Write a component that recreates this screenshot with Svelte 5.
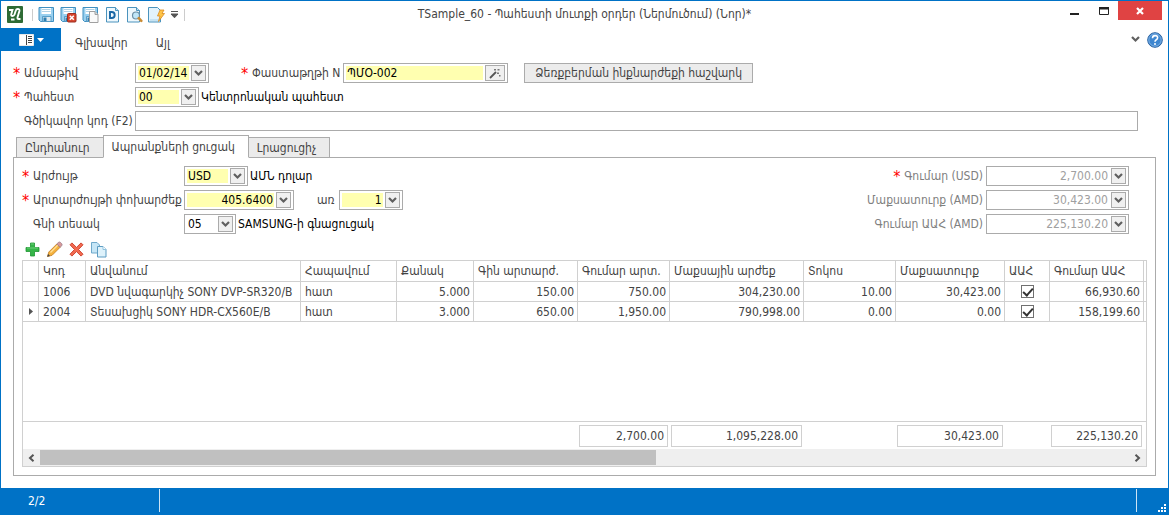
<script>
	let activeTab = $state(1);

	const tabs = ['Ընդհանուր', 'Ապրանքների ցուցակ', 'Լրացուցիչ'];
	const quickIcons = ['save', 'saveClose', 'saveNew', 'doc', 'preview', 'quick'];
	const quickTitles = ['Save', 'Save and close', 'Save and new', 'Document', 'Preview', 'Run'];
	const rowIcons = ['add', 'edit', 'remove', 'copy'];
	const rowTitles = ['Add', 'Edit', 'Delete', 'Copy'];

	const columns = [
		{ key: 'code', label: 'Կոդ', width: 47 },
		{ key: 'name', label: 'Անվանում', width: 0 },
		{ key: 'unit', label: 'Հապավում', width: 96 },
		{ key: 'qty', label: 'Քանակ', width: 77, num: true },
		{ key: 'price', label: 'Գին արտարժ.', width: 104, num: true },
		{ key: 'sum', label: 'Գումար արտ.', width: 92, num: true, total: '2,700.00' },
		{ key: 'customs', label: 'Մաքսային արժեք', width: 134, num: true, total: '1,095,228.00' },
		{ key: 'percent', label: 'Տոկոս', width: 92, num: true },
		{ key: 'duty', label: 'Մաքսատուրք', width: 109, num: true, total: '30,423.00' },
		{ key: 'vat', label: 'ԱԱՀ', width: 45 },
		{ key: 'vatSum', label: 'Գումար ԱԱՀ', width: 94, num: true, total: '225,130.20' }
	];

	let rows = $state([
		{
			code: '1006',
			name: 'DVD նվագարկիչ SONY DVP-SR320/B',
			unit: 'հատ',
			qty: '5.000',
			price: '150.00',
			sum: '750.00',
			customs: '304,230.00',
			percent: '10.00',
			duty: '30,423.00',
			vat: true,
			vatSum: '66,930.60'
		},
		{
			code: '2004',
			name: 'Տեսախցիկ SONY HDR-CX560E/B',
			unit: 'հատ',
			qty: '3.000',
			price: '650.00',
			sum: '1,950.00',
			customs: '790,998.00',
			percent: '0.00',
			duty: '0.00',
			vat: true,
			vatSum: '158,199.60'
		}
	]);
	let current = $state(1);

	const totals = [
		{ id: 'total', label: 'Գումար (USD)', value: '2,700.00', required: true },
		{ id: 'duty', label: 'Մաքսատուրք (AMD)', value: '30,423.00' },
		{ id: 'vat', label: 'Գումար ԱԱՀ (AMD)', value: '225,130.20' }
	];

	// share of the columns that fits in the view
	const visiblePart = 0.566;

	const footerColumns =
		'16px ' + columns.map((c) => (c.width ? `${c.width}px` : 'minmax(0, 1fr)')).join(' ') + ' 2px';
</script>

{#snippet chevron()}
	<svg width="9" height="7" viewBox="0 0 9 7"><path d="M1 1 L4.5 4.5 L8 1" fill="none" stroke="#606060" stroke-width="2.2" /></svg>
{/snippet}

{#snippet floppy()}
	<path d="M1 1.5h14.500v14h-13l-1.500-1.500z" fill="#9ad0ef" stroke="#3f8fc0" />
	<path d="M3.500 2h9.500v6h-9.500z" fill="#fff" />
	<path d="M4 3.500h8.500M4 5.500h8.500" stroke="#b0d2e6" />
	<path d="M4.500 10.500h8.500v5h-8.500z" fill="#dfeaf1" stroke="#3f8fc0" stroke-width=".8" />
	<path d="M5.500 11.500h3v3.500h-3z" fill="#2f7fb0" />
{/snippet}

{#snippet icon(name)}
	<svg width="17" height="17" viewBox="0 0 17 17" aria-hidden="true">
		{#if name === 'save'}
			{@render floppy()}
		{:else if name === 'saveClose'}
			{@render floppy()}
			<rect x="7.500" y="7.500" width="8.500" height="8.500" rx="1" fill="#d8452e" stroke="#9c2e20" />
			<path d="M9.800 9.800l4 4M13.800 9.800l-4 4" stroke="#fff" stroke-width="1.600" />
		{:else if name === 'saveNew'}
			{@render floppy()}
			<path d="M7.500 5.500h5.500l3 3v8h-8.500z" fill="#fafafa" stroke="#a0a0a0" />
			<path d="M13 5.500v3h3" fill="#ddd" stroke="#a0a0a0" />
		{:else if name === 'doc'}
			<path d="M2.500 1.500h9l3 3v11.500h-12z" fill="#eef8fd" stroke="#4b93bd" />
			<path d="M11.500 1.500v3h3" fill="#bfe0f2" stroke="#4b93bd" />
			<path d="M6 6v6h1.700a3 3 0 0 0 0-6z" fill="none" stroke="#1766a5" stroke-width="1.900" />
		{:else if name === 'preview'}
			<path d="M1.500 1.500h9l3 3v11.500h-12z" fill="#eef8fd" stroke="#4b93bd" />
			<path d="M10.500 1.500v3h3" fill="#bfe0f2" stroke="#4b93bd" />
			<circle cx="10" cy="9.500" r="3.500" fill="#bfe6f8" stroke="#6b8fa5" stroke-width="1.200" />
			<path d="M12.800 12.200l2.500 2.600" stroke="#c98b33" stroke-width="2.600" stroke-linecap="round" />
		{:else if name === 'quick'}
			<path d="M.500 1.500h9l3 3v11.500h-12z" fill="#e2f2fb" stroke="#4b93bd" />
			<path d="M2 14h9" stroke="#a9d3ea" />
			<path d="M12 4h4l-2 3.500h2.500l-6 8 1.500-5.500h-2.500z" fill="#ffc447" stroke="#d98a1e" stroke-width=".8" />
		{:else if name === 'add'}
			<path d="M6.500 2h4v4.500h4.500v4h-4.500v4.500h-4v-4.500h-4.500v-4h4.500z" fill="#35b548" stroke="#1f9434" stroke-width=".8" />
			<path d="M7 3h3M3 7h11" stroke="#7cd987" stroke-width=".8" />
		{:else if name === 'edit'}
			<path d="M1.500 15.500l1.300-4.500 8-8 3.300 3.300-8 8z" fill="#f5b23c" stroke="#c07a1e" stroke-width=".8" />
			<path d="M4.500 11.500l7.500-7.500" stroke="#ffe09a" stroke-width="1.200" />
			<path d="M10.800 3l1.600-1.600q1-.8 2 0l1.300 1.300q.8 1 0 2l-1.600 1.600z" fill="#d99a9a" stroke="#9a7a8a" stroke-width=".8" />
			<path d="M1.200 15.800l.9-2.800 1.900 1.900z" fill="#444" />
		{:else if name === 'remove'}
			<path d="M2 3.800l1.900-1.900 4.600 4.500 4.600-4.500 1.900 1.900-4.500 4.700 4.500 4.700-1.900 1.900-4.600-4.500-4.600 4.500-1.900-1.900 4.500-4.700z" fill="#f26a50" stroke="#c93a26" stroke-width=".9" />
		{:else if name === 'copy'}
			<path d="M1.500 1.500h5.500l2.500 2.500v8h-8z" fill="#c6e6f6" stroke="#6fa9cb" />
			<path d="M7.500 5.500h5.500l3 3v7.500h-8.500z" fill="#def2fb" stroke="#5d9cc2" />
			<path d="M13 5.500v3h3" fill="#fff" stroke="#8fc3df" />
		{/if}
	</svg>
{/snippet}

{#snippet editor(id, value, size, kind)}
	<div class="field {size} {kind}">
		<input {id} type="text" {value} disabled={kind === 'disabled'} />
		<button class="drop" aria-label="Open" disabled={kind === 'disabled'}>{@render chevron()}</button>
	</div>
{/snippet}

{#snippet lookup(id, value, size, kind)}
	<div class="field {size} {kind}">
		<select {id}><option>{value}</option></select>
		<span class="drop over">{@render chevron()}</span>
	</div>
{/snippet}

<div class="window">
	<header class="title-bar">
		<div class="quick">
			<svg class="logo" width="16" height="17" viewBox="0 0 16 17" aria-hidden="true">
				<rect width="16" height="17" rx="1" fill="#2e6b35" />
				<path d="M2 4h3.500l-1.300 4.500q-.3 1.500 1.300 1.500 1.500 0 2-1.500l1.300-4q.4-1.500 2-1.500 2 0 1.600 2l-1.900 6.500q-.3 1.500 1.200 1.500h1.800M4 13.500h3.500" fill="none" stroke="#fff" stroke-width="1.900" />
			</svg>
			<i class="sep"></i>
			{#each quickIcons as name, i}
				<button class="icon-button" aria-label={quickTitles[i]}>{@render icon(name)}</button>
			{/each}
			<button class="more" aria-label="Customize">
				<svg width="9" height="8" viewBox="0 0 9 8"><path d="M1 .5h7M1 3h7L4.500 6.800z" fill="#555" stroke="#555" stroke-width="1" /></svg>
			</button>
			<i class="sep"></i>
		</div>
		<h1>TSample_60 - Պահեստի մուտքի օրդեր (Ներմուծում) (Նոր)*</h1>
		<div class="window-buttons">
			<button aria-label="Minimize"><svg width="9" height="8" viewBox="0 0 9 8"><path d="M0 6h9v2H0z" fill="#222" /></svg></button>
			<button aria-label="Maximize"><svg width="10" height="8" viewBox="0 0 10 8"><path d="M.500 1v6.500h9V1" fill="none" stroke="#222" /><path d="M0 0h10v2.500H0z" fill="#222" /></svg></button>
			<button class="close" aria-label="Close"><svg width="8" height="8" viewBox="0 0 8 8"><path d="M1 1l6 6M7 1L1 7" stroke="#fff" stroke-width="2.200" /></svg></button>
		</div>
	</header>

	<nav class="ribbon">
		<button class="file" aria-label="Menu">
			<svg width="15" height="12" viewBox="0 0 15 12"><path d="M.500 .5h14v11h-14z" fill="#fff" stroke="#e8e8e8" /><path d="M7.500 1v10" stroke="#444" /><path d="M9 2.500h4M9 4.500h4M9 6.500h4M9 8.500h4" stroke="#444" /></svg>
			<svg width="7" height="4" viewBox="0 0 7 4"><path d="M0 0h7L3.500 4z" fill="#fff" /></svg>
		</button>
		<a href="#main">Գլխավոր</a>
		<a href="#other">Այլ</a>
		<span class="spacer"></span>
		<button class="plain" aria-label="Collapse">{@render chevron()}</button>
		<button class="help" aria-label="Help">
			<svg width="16" height="16" viewBox="0 0 16 16">
				<circle cx="8" cy="8" r="7.300" fill="#3f87d0" stroke="#2b62a0" />
				<circle cx="8" cy="8" r="6.200" fill="none" stroke="#8dbdea" stroke-width=".8" />
				<path d="M5.500 6.200q0-2.600 2.600-2.600t2.500 2.200q0 1.200-1.300 1.900T8 9.800" fill="none" stroke="#fff" stroke-width="1.600" />
				<circle cx="8" cy="12" r="1" fill="#fff" />
			</svg>
		</button>
	</nav>

	<main>
		<form class="document" onsubmit={(e) => e.preventDefault()}>
			<div class="row">
				<label class="required" for="date">Ամսաթիվ</label>
				{@render editor('date', '01/02/14', 'w-date', 'yellow')}
				<label class="required number" for="number">Փաստաթղթի N</label>
				<div class="field w-number yellow">
					<input id="number" type="text" value="ՊՄՕ-002" />
					<button class="drop wide" aria-label="Generate">
						<svg width="12" height="11" viewBox="0 0 12 11"><path d="M1 10l6-6" stroke="#555" stroke-width="1.800" /><path d="M5 1h2v1.500H5zM8.500 1h2v1.500h-2zM8 4.500h2V6H8zM10 7h1.500v1.500H10z" fill="#777" /></svg>
					</button>
				</div>
				<button class="command">Ձեռքբերման ինքնարժեքի հաշվարկ</button>
			</div>
			<div class="row">
				<label class="required" for="store">Պահեստ</label>
				{@render lookup('store', '00', 'w-code', 'yellow')}
				<span class="hint">Կենտրոնական պահեստ</span>
			</div>
			<div class="row">
				<label for="barcode">Գծիկավոր կոդ (F2)</label>
				<input id="barcode" class="barcode" type="text" />
			</div>
		</form>

		<div class="tabs" role="tablist">
			{#each tabs as tab, i}
				<button role="tab" aria-selected={i === activeTab} class:active={i === activeTab} onclick={() => (activeTab = i)}>{tab}</button>
			{/each}
		</div>

		<section class="panel">
			<div class="settings">
				<div class="left">
					<div class="row">
						<label class="required" for="currency">Արժույթ</label>
						{@render lookup('currency', 'USD', 'w-code', 'yellow')}
						<span class="hint">ԱՄՆ դոլար</span>
					</div>
					<div class="row">
						<label class="required" for="rate">Արտարժույթի փոխարժեք</label>
						{@render editor('rate', '405.6400', 'w-rate', 'yellow num')}
						<label class="per" for="per">առ</label>
						{@render editor('per', '1', 'w-code', 'yellow num')}
					</div>
					<div class="row">
						<label for="priceType">Գնի տեսակ</label>
						{@render lookup('priceType', '05', 'w-short', '')}
						<span class="hint">SAMSUNG-ի գնացուցակ</span>
					</div>
				</div>
				<div class="right">
					{#each totals as total}
						<div class="row">
							<label class:required={total.required} for={total.id}>{total.label}</label>
							{@render editor(total.id, total.value, 'w-total', 'disabled')}
						</div>
					{/each}
				</div>
			</div>

			<div class="tools">
				{#each rowIcons as name, i}
					<button class="icon-button" aria-label={rowTitles[i]}>{@render icon(name)}</button>
				{/each}
			</div>

			<div class="grid">
				<table>
					<colgroup>
						<col style="width: 16px" />
						{#each columns as col}
							<col style={col.width ? `width: ${col.width}px` : ''} />
						{/each}
						<col style="width: 2px" />
					</colgroup>
					<thead>
						<tr>
							<th></th>
							{#each columns as col}
								<th>{col.label}</th>
							{/each}
							<th></th>
						</tr>
					</thead>
					<tbody>
						{#each rows as row, i}
							<tr onclick={() => (current = i)}>
								<td class="marker">
									{#if i === current}
										<svg width="4" height="7" viewBox="0 0 4 7"><path d="M0 0L4 3.500L0 7z" fill="#555" /></svg>
									{/if}
								</td>
								{#each columns as col}
									{#if col.key === 'vat'}
										<td class="check"><input type="checkbox" aria-label={col.label} bind:checked={row.vat} /></td>
									{:else}
										<td class:num={col.num}>{row[col.key]}</td>
									{/if}
								{/each}
								<td></td>
							</tr>
						{/each}
					</tbody>
				</table>
				<div class="summary" style="grid-template-columns: {footerColumns}">
					<span></span>
					{#each columns as col}
						<span class:total={col.total}>{col.total ?? ''}</span>
					{/each}
				</div>
				<div class="scrollbar">
					<button aria-label="Scroll left"><svg width="7" height="8" viewBox="0 0 7 8"><path d="M5.500 .8L2 4l3.500 3.200" fill="none" stroke="#555" stroke-width="2" /></svg></button>
					<div class="track"><div class="thumb" style="width: {visiblePart * 100}%"></div></div>
					<button aria-label="Scroll right"><svg width="7" height="8" viewBox="0 0 7 8"><path d="M1.500 .8L5 4L1.500 7.200" fill="none" stroke="#555" stroke-width="2" /></svg></button>
				</div>
			</div>
		</section>
	</main>

	<footer class="status">
		<span class="position">2/2</span>
		<span class="grip">
			<svg width="8" height="8" viewBox="0 0 8 8"><path d="M6 0h2v2H6zM3 3h2v2H3zM6 3h2v2H6zM0 6h2v2H0zM3 6h2v2H3zM6 6h2v2H6z" fill="#fff" /></svg>
		</span>
	</footer>
</div>

<style>
	:global(body) {
		margin: 0;
		background: #fff;
	}

	.window {
		--blue: #0072c6;
		--line: #ababab;
		--grid-line: #d0d0d0;
		box-sizing: border-box;
		display: flex;
		flex-direction: column;
		min-height: 100vh;
		border: 1px solid var(--blue);
		border-bottom: 0;
		font: 12px/16px 'DejaVu Sans Condensed', 'DejaVu Sans', sans-serif;
		color: #444;
		white-space: nowrap;
	}

	.window :global(*) {
		box-sizing: border-box;
	}

	svg {
		display: block;
		flex: none;
	}

	button,
	input,
	select {
		margin: 0;
		padding: 0;
		border: 0;
		border-radius: 0;
		background: none;
		font: inherit;
		color: inherit;
	}

	.title-bar {
		display: grid;
		grid-template-columns: 1fr auto 1fr;
		height: 27px;
	}

	.quick {
		display: flex;
		align-items: center;
		gap: 5px;
		padding-left: 6px;
	}

	.logo {
		margin-right: 4px;
	}

	.sep {
		width: 1px;
		height: 12px;
		background: #ccc;
	}

	h1 {
		margin: 0;
		font-size: 12px;
		font-weight: normal;
		line-height: 26px;
	}

	.window-buttons {
		display: flex;
		justify-content: flex-end;
		align-items: flex-start;
		padding-right: 6px;
	}

	.window-buttons button {
		display: flex;
		align-items: center;
		justify-content: center;
		width: 29px;
		height: 19px;
	}

	.window-buttons .close {
		width: 44px;
		background: #e04343;
	}

	.ribbon {
		display: flex;
		align-items: center;
		height: 23px;
		padding-right: 5px;
	}

	.ribbon .file {
		display: flex;
		align-items: center;
		justify-content: center;
		gap: 3px;
		width: 60px;
		height: 23px;
		background: var(--blue);
	}

	.ribbon a {
		padding: 6px 14px 0;
		color: #444;
		text-decoration: none;
	}

	.spacer {
		flex: 1;
	}

	.help {
		margin-left: 7px;
	}

	main {
		flex: 1;
		display: flex;
		flex-direction: column;
		padding: 12px;
	}

	.row {
		display: flex;
		align-items: center;
		height: 20px;
		margin-bottom: 4px;
	}

	.row label {
		flex: none;
		padding-left: 11px;
	}

	.row .required::before {
		content: '*';
		display: inline-block;
		width: 11px;
		margin-left: -11px;
		color: #f00;
		font-size: 16px;
		line-height: 12px;
		vertical-align: -2px;
	}

	.document label:first-child {
		width: 122px;
	}

	.document .number {
		margin: 0 3px 0 32px;
	}

	.field {
		display: flex;
		flex: none;
		gap: 2px;
		height: 20px;
		padding: 2px;
		border: 1px solid var(--line);
		background: #fff;
		color: #000;
	}

	.field input,
	.field select {
		flex: 1;
		min-width: 0;
		height: 14px;
		padding: 0 1px;
		line-height: 14px;
		appearance: none;
	}

	.yellow input,
	.yellow select {
		background: #ffffb0;
	}

	.num input,
	.disabled input {
		text-align: right;
	}

	.disabled input {
		color: #a0a0a0;
	}

	.w-date {
		width: 74px;
	}

	.w-code {
		width: 64px;
	}

	.w-short {
		width: 52px;
	}

	.w-rate {
		width: 110px;
	}

	.w-number {
		width: 165px;
	}

	.w-total {
		width: 143px;
	}

	.drop {
		display: flex;
		flex: none;
		align-items: center;
		justify-content: center;
		width: 15px;
		height: 16px;
		margin-top: -1px;
		border: 1px solid var(--line);
		background: #f0f0f0;
	}

	.wide {
		width: 20px;
	}

	.field select {
		margin-right: -17px;
	}

	.over {
		pointer-events: none;
		box-shadow: -2px 0 0 #fff;
	}

	.hint {
		padding-left: 2px;
		color: #000;
	}

	.command {
		height: 20px;
		margin-left: 16px;
		padding: 0 10px;
		border: 1px solid var(--line);
		background: #ececec;
	}

	.barcode {
		flex: 1;
		height: 20px;
		margin-right: 18px;
		border: 1px solid var(--line);
	}

	.tabs {
		display: flex;
		align-items: flex-end;
		height: 23px;
		margin-bottom: -1px;
		padding-left: 3px;
	}

	.tabs button {
		height: 21px;
		margin-right: -1px;
		padding: 0 13px 0 8px;
		border: 1px solid var(--line);
		background: #ebebeb;
	}

	.tabs .active {
		z-index: 1;
		height: 23px;
		border-bottom-color: #fff;
		background: #fff;
	}

	.panel {
		flex: 1;
		display: flex;
		flex-direction: column;
		padding: 8px;
		border: 1px solid var(--line);
	}

	.settings {
		display: flex;
		justify-content: space-between;
		padding-right: 18px;
	}

	.left label:first-child {
		width: 162px;
	}

	.left .per {
		padding: 0 4px 0 23px;
	}

	.right {
		color: #808080;
	}

	.right .row {
		justify-content: flex-end;
		gap: 3px;
	}

	.tools {
		display: flex;
		align-items: center;
		gap: 5px;
		height: 22px;
		padding: 0 2px;
	}

	.grid {
		flex: 1;
		display: flex;
		flex-direction: column;
		border: 1px solid var(--grid-line);
	}

	table {
		width: 100%;
		margin-bottom: auto;
		border-collapse: separate;
		border-spacing: 0;
		table-layout: fixed;
	}

	th,
	td {
		height: 20px;
		padding: 0 4px;
		overflow: hidden;
		border-right: 1px solid var(--grid-line);
		border-bottom: 1px solid var(--grid-line);
		font-weight: normal;
		text-align: left;
	}

	th {
		height: 21px;
	}

	th:last-child,
	td:last-child {
		padding: 0;
		border-right: 0;
	}

	td.num {
		padding: 0 3px;
		text-align: right;
	}

	td.marker {
		padding: 0 0 0 6px;
	}

	.check input {
		display: block;
		width: 13px;
		height: 13px;
		margin: 0 auto;
		border: 1px solid #707070;
		appearance: none;
	}

	.check input:checked::before {
		content: '';
		display: block;
		width: 8px;
		height: 4px;
		margin: 2px 1px;
		border: solid #333;
		border-width: 0 0 2px 2px;
		transform: rotate(-48deg);
	}

	.summary {
		display: grid;
		height: 28px;
		padding: 3px 0;
		border-top: 1px solid var(--grid-line);
	}

	.summary .total {
		margin: 0 2px 0 1px;
		padding: 2px 3px;
		border: 1px solid var(--grid-line);
		text-align: right;
	}

	.scrollbar {
		display: flex;
		height: 17px;
		background: #efefef;
	}

	.scrollbar button {
		display: flex;
		align-items: center;
		justify-content: center;
		width: 17px;
	}

	.track {
		flex: 1;
		padding: 1px 0;
	}

	.thumb {
		height: 15px;
		background: #c0c0c0;
	}

	.status {
		display: flex;
		height: 27px;
		padding: 1px 2px 3px 0;
		background: var(--blue);
		color: #fff;
	}

	.position {
		width: 159px;
		padding: 4px 0 0 27px;
		border-right: 1px solid #cde4f5;
	}

	.grip {
		display: flex;
		align-items: flex-end;
		justify-content: flex-end;
		width: 30px;
		margin-left: auto;
		border-left: 1px solid #cde4f5;
	}
</style>
